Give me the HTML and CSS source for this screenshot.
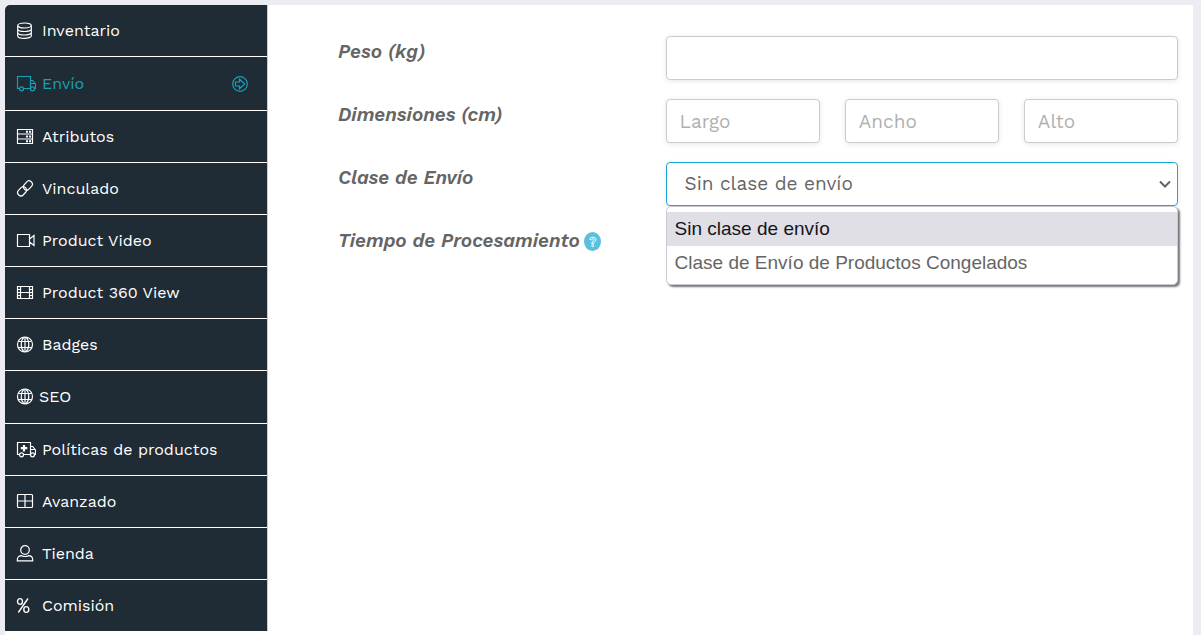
FILE: index.html
```html
<!DOCTYPE html>
<html lang="es">
<head>
<meta charset="utf-8">
<meta name="viewport" content="width=device-width, initial-scale=1">
<title>Envío</title>
<link rel="stylesheet" href="styles.css">
</head>
<body>
<svg class="sprite" aria-hidden="true">
  <symbol id="globe" viewBox="0 0 20 18"><circle cx="9" cy="8.500" r="7.500"/><path d="M9 1v15M2.500 5.500h13M2.500 11.500h13M8 1.200C4.300 5 4.300 12 8 15.800M10 1.200c3.700 3.800 3.700 10.800 0 14.600"/></symbol>
  <symbol id="truck" viewBox="0 0 20 18"><path d="M3.300 13.500H1.500v-12h13v12H7.700M14.500 5.500h2.200l2.800 3.500v4.500h-1M14.500 8.500h4.700M13.500 13.500h.8"/><circle cx="5.500" cy="13.800" r="2"/><circle cx="16.500" cy="13.800" r="2"/></symbol>
</svg>
<main class="panel">
  <nav class="menu">
    <a class="item" href="#inventario"><svg class="icon" viewBox="0 0 20 18"><ellipse cx="8.500" cy="3.500" rx="6.800" ry="2.500"/><path d="M1.700 3.700v10c0 3.500 13.600 3.500 13.600 0v-10M1.700 7c0 3.300 13.600 3.300 13.600 0M1.700 10.500c0 3.300 13.600 3.300 13.600 0"/></svg><span>Inventario</span></a>
    <a class="item active" href="#envio"><svg class="icon"><use href="#truck"/></svg><span>Envío</span><svg class="arrow" viewBox="0 0 16 16"><circle cx="8" cy="8" r="7.300"/><path d="M3.500 6h4V3.200L12.700 8l-5.200 4.800V10h-4z"/></svg></a>
    <a class="item" href="#atributos"><svg class="icon" viewBox="0 0 20 18"><path d="M1.500 1.500h15v14h-15zM1.500 6h15M1.500 11h15"/><path class="dots" d="M10 3.800h5M10 8.500h5M10 13.300h5"/></svg><span>Atributos</span></a>
    <a class="item" href="#vinculado"><svg class="icon" viewBox="0 0 20 18"><rect x="6.900" y="2.200" width="10" height="6.600" rx="3.300" transform="rotate(-48 11.900 5.500)"/><rect x="1.100" y="8" width="10" height="6.600" rx="3.300" transform="rotate(-48 6.100 11.300)"/></svg><span>Vinculado</span></a>
    <a class="item" href="#video"><svg class="icon" viewBox="0 0 20 18"><path d="M1.500 2.500h12v12h-12zM13.500 7l4.500-3.500v10L13.500 10"/></svg><span>Product Video</span></a>
    <a class="item" href="#view360"><svg class="icon" viewBox="0 0 20 18"><path d="M1.500 2.500h15v12h-15zM4.500 2.500v12M13.500 2.500v12M4.500 8.500h9M1.500 5.500h3M1.500 8.500h3M1.500 11.500h3M13.500 5.500h3M13.500 8.500h3M13.500 11.500h3"/></svg><span>Product 360 View</span></a>
    <a class="item" href="#badges"><svg class="icon"><use href="#globe"/></svg><span>Badges</span></a>
    <a class="item seo" href="#seo"><svg class="icon"><use href="#globe"/></svg><span>SEO</span></a>
    <a class="item" href="#politicas"><svg class="icon" viewBox="0 0 20 18"><use href="#truck" width="20" height="18"/><path class="cross" d="M8 4v6.500M4.800 7.200h6.500"/></svg><span>Políticas de productos</span></a>
    <a class="item" href="#avanzado"><svg class="icon" viewBox="0 0 20 18"><rect x="1.500" y="1.500" width="15" height="13" rx="1"/><path d="M9 1.500v13M1.500 8h15"/></svg><span>Avanzado</span></a>
    <a class="item" href="#tienda"><svg class="icon" viewBox="0 0 20 18"><ellipse cx="9" cy="5" rx="4.300" ry="4.300"/><path d="M5.500 10.700c2 .9 5 .9 7 0 2.700 0 4.200 1.500 4.200 4.300v.8H1.300V15c0-2.800 1.500-4.300 4.200-4.300z"/></svg><span>Tienda</span></a>
    <a class="item" href="#comision"><svg class="icon percent" viewBox="0 0 20 18"><ellipse cx="4" cy="4.500" rx="2.500" ry="2.900"/><ellipse cx="10.300" cy="12.500" rx="2.500" ry="2.900"/><path d="M12 1.500L2.300 15.500"/></svg><span>Comisión</span></a>
  </nav>
  <form class="form">
    <label class="label" for="peso">Peso (kg)</label>
    <input class="field" id="peso" type="text">
    <label class="label" for="largo">Dimensiones (cm)</label>
    <div class="sizes">
      <input class="field" id="largo" type="text" placeholder="Largo">
      <input class="field" type="text" placeholder="Ancho" aria-label="Ancho">
      <input class="field" type="text" placeholder="Alto" aria-label="Alto">
    </div>
    <label class="label" for="clase">Clase de Envío</label>
    <div class="picker">
      <select class="field select" id="clase">
        <option>Sin clase de envío</option>
        <option>Clase de Envío de Productos Congelados</option>
      </select>
      <svg class="chevron" viewBox="0 0 12 8"><path d="M1 1.500l5 5 5-5"/></svg>
      <ul class="options">
        <li class="option chosen">Sin clase de envío</li>
        <li class="option">Clase de Envío de Productos Congelados</li>
      </ul>
    </div>
    <div class="label time">Tiempo de Procesamiento
      <svg class="help" viewBox="0 0 17 19"><ellipse class="disc" cx="8.500" cy="9.500" rx="8.500" ry="9.500"/><path d="M5.800 7.500c0-3.200 6.200-3.200 6.200.2 0 2-2.400 2.200-2.400 4H7.800c0-3 2.400-2.700 2.400-4 0-1.200-2.600-1.200-2.700.2z"/><circle cx="8.700" cy="13.700" r="1"/></svg>
    </div>
  </form>
</main>
</body>
</html>
```
FILE: styles.css
```css
* { box-sizing: border-box; }
body {
  margin: 0;
  padding: 5px 8px 0 5px;
  background: #ecedf2;
  color: #656565;
  font-family: "Work Sans", Inter, sans-serif;
}
.sprite { position: absolute; width: 0; height: 0; }
svg { fill: none; stroke: currentColor; stroke-width: 1.2; }
.panel {
  display: flex;
  align-items: flex-start;
  min-height: calc(100vh - 5px);
  background: #fff;
  border-radius: 5px 0 0 0;
}
.menu {
  flex: 0 0 263px;
  border-right: 1px solid #ccc;
  border-radius: 5px 0 0 0;
  overflow: hidden;
}
.item {
  display: flex;
  align-items: center;
  gap: 6px;
  height: 52px;
  padding: 0 19px 0 11px;
  border-bottom: 1px solid #fff;
  background: #1f2b35;
  color: #fff;
  font-size: 16px;
  line-height: 24px;
  text-decoration: none;
}
.item:last-child { height: 51px; border-bottom: 0; }
.active { height: 54px; color: #17a2b8; }
.seo { height: 53px; gap: 3px; }
.icon { flex: none; width: 20px; height: 18px; }
.percent { stroke-width: 1.4; }
.dots { stroke-width: 2; stroke-dasharray: 2 1; }
.cross { stroke-width: 2.2; }
.arrow { width: 16px; height: 16px; margin-left: auto; }
.form {
  flex: 1;
  display: grid;
  grid-template-columns: 39fr 61fr;
  row-gap: 19px;
  padding: 31px 15px 0 70px;
}
.label {
  padding-top: 3px;
  font-size: 19px;
  font-style: italic;
  font-weight: 600;
  line-height: 26px;
}
.time { display: flex; align-items: center; align-self: start; gap: 4px; }
.help { width: 17px; height: 19px; color: #fff; stroke-width: 1; }
.disc { fill: #5bc0de; stroke: none; }
.field {
  display: block;
  width: 100%;
  min-width: 0;
  height: 44px;
  padding: 0 13px;
  border: 1px solid #ccc;
  border-radius: 4px;
  background: #fff;
  box-shadow: 0 1px 5px rgba(0, 0, 0, .1);
  color: #656565;
  font: 19px/24px "Work Sans", Inter, sans-serif;
}
.field::placeholder { color: #b0b0b0; opacity: 1; }
.sizes { display: grid; grid-template-columns: repeat(3, 1fr); gap: 25px; }
.picker { position: relative; }
.select { padding: 0 30px 0 18px; border-color: #1ca6d8; appearance: none; outline: 0; }
.chevron {
  position: absolute;
  top: 18px;
  right: 7px;
  width: 12px;
  height: 8px;
  stroke-width: 2;
  pointer-events: none;
}
.options {
  position: absolute;
  top: 44px;
  left: 0;
  right: 0;
  margin: 0;
  padding: 5px 0 4px;
  border: 1px solid #cbcad4;
  border-radius: 5px;
  background: #fff;
  box-shadow: 2px 2px 2px #77777c;
  list-style: none;
  font: 19px/34px "Liberation Sans", Arial, sans-serif;
}
.option { padding: 0 8px; }
.chosen { background: #e0dfe6; color: #15141a; }
```
